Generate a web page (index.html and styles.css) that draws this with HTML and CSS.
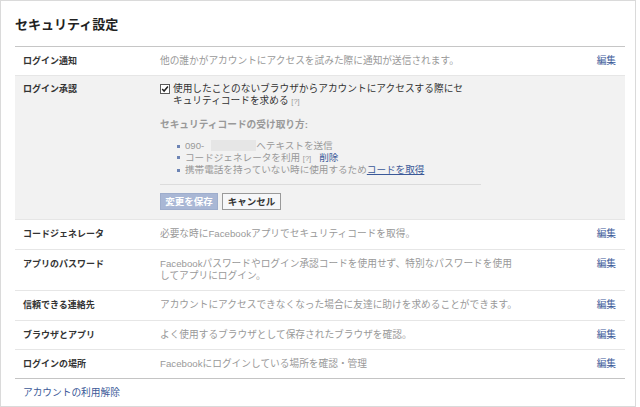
FILE: index.html
```html
<!DOCTYPE html>
<html lang="ja">
<head>
<meta charset="utf-8">
<title>セキュリティ設定</title>
<link rel="stylesheet" href="styles.css">
</head>
<body>
<div class="panel">
  <h1 class="title">セキュリティ設定</h1>
  <div class="rows">
    <div class="row">
      <div class="label">ログイン通知</div>
      <div class="desc">他の誰かがアカウントにアクセスを試みた際に通知が送信されます。</div>
      <a class="edit">編集</a>
    </div>
    <div class="row open">
      <div class="label">ログイン承認</div>
      <div class="detail">
        <div class="check">
          <svg class="box" width="10" height="10" viewBox="0 0 10 10"><rect x="0.5" y="0.5" width="9" height="9" fill="#fff" stroke="#5a5a5a"/><path d="M2.2 5.1 L4.1 7.1 L7.9 2.6" fill="none" stroke="#222" stroke-width="1.5"/></svg>
          <div class="check-text">使用したことのないブラウザからアカウントにアクセスする際にセ<br>キュリティコードを求める <span class="help">[?]</span></div>
        </div>
        <div class="sub-title">セキュリティコードの受け取り方:</div>
        <ul class="methods">
          <li>090-<span class="redact"></span>へテキストを送信</li>
          <li>コードジェネレータを利用 <span class="help">[?]</span><a class="link remove">削除</a></li>
          <li>携帯電話を持っていない時に使用するため<a class="link under">コードを取得</a></li>
        </ul>
        <div class="sep"></div>
        <div class="actions">
          <button class="btn primary" disabled>変更を保存</button>
          <button class="btn cancel">キャンセル</button>
        </div>
      </div>
    </div>
    <div class="row">
      <div class="label">コードジェネレータ</div>
      <div class="desc">必要な時にFacebookアプリでセキュリティコードを取得。</div>
      <a class="edit">編集</a>
    </div>
    <div class="row">
      <div class="label">アプリのパスワード</div>
      <div class="desc">Facebookパスワードやログイン承認コードを使用せず、特別なパスワードを使用<br>してアプリにログイン。</div>
      <a class="edit">編集</a>
    </div>
    <div class="row">
      <div class="label">信頼できる連絡先</div>
      <div class="desc">アカウントにアクセスできなくなった場合に友達に助けを求めることができます。</div>
      <a class="edit">編集</a>
    </div>
    <div class="row">
      <div class="label">ブラウザとアプリ</div>
      <div class="desc">よく使用するブラウザとして保存されたブラウザを確認。</div>
      <a class="edit">編集</a>
    </div>
    <div class="row last">
      <div class="label">ログインの場所</div>
      <div class="desc">Facebookにログインしている場所を確認・管理</div>
      <a class="edit">編集</a>
    </div>
  </div>
  <div class="footer"><a class="link">アカウントの利用解除</a></div>
</div>
</body>
</html>
```

FILE: styles.css
```css
body {
  margin: 0;
  background: #fff;
  font-family: "Liberation Sans", "Noto Sans CJK JP", sans-serif;
}

.panel {
  box-sizing: border-box;
  width: 636px;
  height: 407px;
  border: 1px solid #dadada;
  padding: 0 10px 0 14px;
}

.title {
  margin: 0;
  padding: 15px 0 13px;
  font-size: 13px;
  line-height: 17px;
  font-weight: bold;
  color: #222;
  border-bottom: 1px solid #c6c6c6;
}

.row {
  display: grid;
  grid-template-columns: 137px 1fr auto;
  padding: 8px 9px 8.4px 8px;
  border-bottom: 1px solid #e6e6e6;
  font-size: 9.7px;
  line-height: 12px;
}

.row.open {
  background: #f2f2f2;
  padding-top: 7px;
  padding-bottom: 9px;
}

.row.last {
  border-bottom-color: #c4c4c4;
}

.label {
  font-size: 9px;
  font-weight: bold;
  color: #333;
}

.desc {
  color: #999;
}

.edit {
  color: #3b5998;
}

.detail {
  grid-column: 2 / span 2;
}

.check {
  display: flex;
  gap: 3px;
  color: #333;
}

.box {
  flex: none;
  margin-top: 1px;
}

.help {
  font-size: 7.5px;
  color: #999;
}

.sub-title {
  margin-top: 11px;
  color: #999;
  font-weight: bold;
}

.methods {
  list-style: none;
  margin: 9px 0 0;
  padding: 0 0 0 25px;
  font-size: 9.6px;
  line-height: 11.5px;
  color: #999;
}

.methods li {
  position: relative;
}

.methods li::before {
  content: "";
  position: absolute;
  left: -8px;
  top: 4.5px;
  width: 3px;
  height: 3px;
  background: #6d84b4;
}

.redact {
  display: inline-block;
  width: 45px;
  height: 11px;
  margin-left: 7px;
  vertical-align: top;
  background: #e6e6e6;
}

.link {
  color: #3b5998;
}

.remove {
  margin-left: 8px;
}

.under {
  text-decoration: underline;
}

.sep {
  width: 321px;
  margin-top: 8.5px;
  border-top: 1px solid #dcdcdc;
}

.actions {
  display: flex;
  gap: 4px;
  margin-top: 8px;
}

.btn {
  box-sizing: border-box;
  height: 17px;
  padding: 0;
  font-family: inherit;
  font-size: 9.5px;
  line-height: 15px;
  font-weight: bold;
  border: 1px solid;
}

.btn.primary {
  width: 58px;
  background: #a9b7d5;
  border-color: #9eadcc;
  color: #fff;
}

.btn.cancel {
  width: 59px;
  background: #f6f7f9;
  border-color: #9a9a9a;
  color: #333;
}

.footer {
  padding: 8px 0 0 8px;
  font-size: 9.7px;
  line-height: 12px;
}
```
